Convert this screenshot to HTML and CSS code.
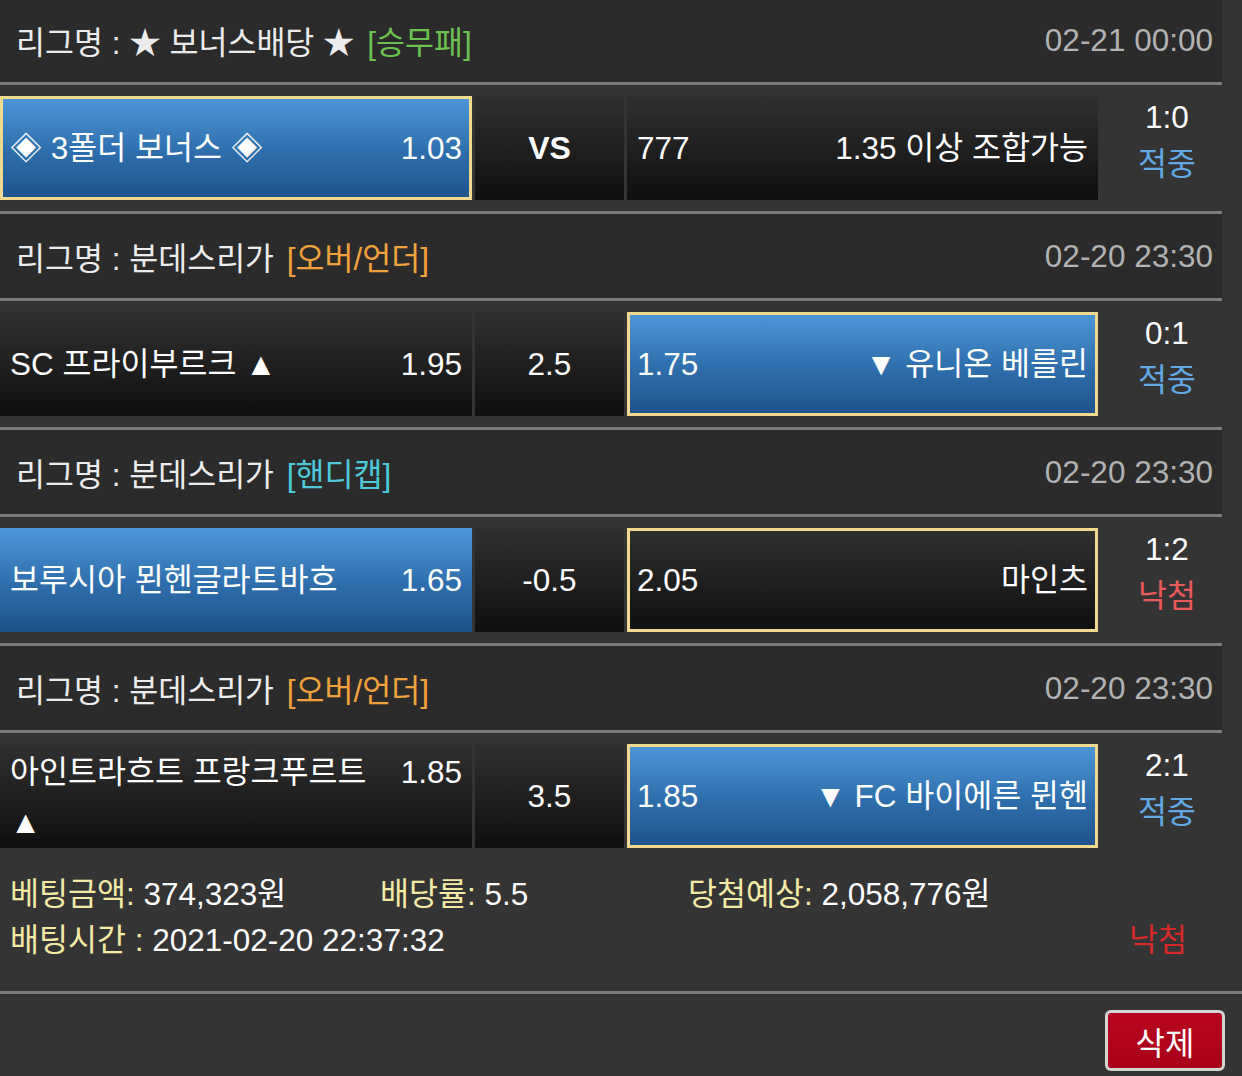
FILE: index.html
```html
<!DOCTYPE html>
<html lang="ko">
<head>
<meta charset="utf-8">
<title>배팅내역</title>
<link rel="stylesheet" href="styles.css">
</head>
<body>
<div class="page">
  <section class="match first">
    <div class="league"><span class="lname">리그명 : ★ 보너스배당 ★ <em class="tag win">[승무패]</em></span><span class="ldate">02-21 00:00</span></div>
    <div class="sep"></div>
    <div class="row">
      <div class="cell home blue picked"><span class="team">◈ 3폴더 보너스 ◈</span><span class="odd">1.03</span></div>
      <div class="cell mid dark"><span class="vs">VS</span></div>
      <div class="cell away dark"><span class="odd">777</span><span class="team">1.35 이상 조합가능</span></div>
      <div class="res"><span class="score">1:0</span><span class="hit">적중</span></div>
    </div>
    <div class="sep"></div>
  </section>
  <section class="match">
    <div class="league"><span class="lname">리그명 : 분데스리가 <em class="tag ou">[오버/언더]</em></span><span class="ldate">02-20 23:30</span></div>
    <div class="sep"></div>
    <div class="row">
      <div class="cell home dark"><span class="team">SC 프라이부르크 ▲</span><span class="odd">1.95</span></div>
      <div class="cell mid dark"><span>2.5</span></div>
      <div class="cell away blue picked"><span class="odd">1.75</span><span class="team">▼ 유니온 베를린</span></div>
      <div class="res"><span class="score">0:1</span><span class="hit">적중</span></div>
    </div>
    <div class="sep"></div>
  </section>
  <section class="match">
    <div class="league"><span class="lname">리그명 : 분데스리가 <em class="tag hc">[핸디캡]</em></span><span class="ldate">02-20 23:30</span></div>
    <div class="sep"></div>
    <div class="row">
      <div class="cell home blue"><span class="team">보루시아 묀헨글라트바흐</span><span class="odd">1.65</span></div>
      <div class="cell mid dark"><span>-0.5</span></div>
      <div class="cell away dark picked"><span class="odd">2.05</span><span class="team">마인츠</span></div>
      <div class="res"><span class="score">1:2</span><span class="miss">낙첨</span></div>
    </div>
    <div class="sep"></div>
  </section>
  <section class="match">
    <div class="league"><span class="lname">리그명 : 분데스리가 <em class="tag ou">[오버/언더]</em></span><span class="ldate">02-20 23:30</span></div>
    <div class="sep"></div>
    <div class="row">
      <div class="cell home dark tall"><span class="team wrap">아인트라흐트 프랑크푸르트 ▲</span><span class="odd">1.85</span></div>
      <div class="cell mid dark"><span>3.5</span></div>
      <div class="cell away blue picked"><span class="odd">1.85</span><span class="team">▼ FC 바이에른 뮌헨</span></div>
      <div class="res"><span class="score">2:1</span><span class="hit">적중</span></div>
    </div>
  </section>
  <div class="summary">
    <div class="sline">
      <span class="sitem s1"><b>베팅금액:</b> 374,323원</span>
      <span class="sitem s2"><b>배당률:</b> 5.5</span>
      <span class="sitem s3"><b>당첨예상:</b> 2,058,776원</span>
    </div>
    <div class="sline">
      <span class="sitem"><b>배팅시간 :</b> 2021-02-20 22:37:32</span>
      <span class="lost">낙첨</span>
    </div>
  </div>
  <div class="sep full"></div>
  <div class="actions"><button class="del">삭제</button></div>
</div>
</body>
</html>
```

FILE: styles.css
```css
* { box-sizing: border-box; }
html, body {
  margin: 0;
  padding: 0;
  background: #343434;
}
body {
  width: 1242px;
  height: 1076px;
  overflow: hidden;
  font-family: "Liberation Sans", "Noto Sans CJK KR", sans-serif;
  font-size: 31.5px;
  color: #ffffff;
}
.page {
  display: flex;
  flex-direction: column;
}
.match.first { margin-top: -2px; }
.league {
  width: 1222px;
  height: 84px;
  background: #2b2b2b;
  display: flex;
  align-items: center;
  justify-content: space-between;
  padding: 0 9px 0 16px;
  color: #ececec;
  white-space: nowrap;
}
.tag { font-style: normal; margin-left: 4px; }
.tag.win { color: #6cc24e; }
.tag.ou { color: #f2a23c; }
.tag.hc { color: #4ec9dc; }
.ldate { color: #b2b2b2; }
.sep {
  width: 1222px;
  height: 3px;
  background: #7c7c7c;
}
.sep.full { width: 1242px; }
.row {
  display: flex;
  align-items: flex-start;
  height: 126px;
  padding: 11px 0;
}
.cell {
  height: 104px;
  display: flex;
  align-items: center;
  justify-content: space-between;
  border: 3px solid transparent;
  background-origin: border-box;
  padding: 0 7px;
  line-height: 50px;
}
.cell.home { width: 472px; }
.cell.mid { width: 149px; margin-left: 3px; justify-content: center; }
.cell.away { width: 471px; margin-left: 3px; }
.cell.tall { align-items: flex-start; }
.dark { background-image: linear-gradient(#303030, #0f0f0f); }
.blue { background-image: linear-gradient(#4e98d8, #2e6dab 55%, #1e5289); }
.picked { border-color: #f2d98f; }
.team { white-space: nowrap; }
.team.wrap { white-space: normal; max-width: 376px; }
.odd { white-space: nowrap; }
.vs { font-weight: bold; font-size: 32px; }
.res {
  flex: 1;
  margin-top: -2px;
  padding-right: 6px;
  display: flex;
  flex-direction: column;
  align-items: center;
  line-height: 47px;
}
.hit { color: #62a8e4; }
.miss { color: #ea5a5a; }
.summary {
  height: 132px;
  padding: 12px 55px 0 10px;
  line-height: 46px;
}
.sline {
  display: flex;
  justify-content: space-between;
}
.sline:first-child { justify-content: flex-start; }
.sitem b { font-weight: normal; color: #f3eaa4; }
.s1 { width: 370px; }
.s2 { width: 308px; }
.lost { color: #d62a2a; }
.actions {
  display: flex;
  justify-content: flex-end;
  padding: 16px 17px 0 0;
}
.del {
  width: 120px;
  height: 61px;
  border: 3px solid #d4d4d4;
  border-radius: 6px;
  background: linear-gradient(#b8061f, #a8001a);
  color: #ffffff;
  font-family: "Liberation Sans", "Noto Sans CJK KR", sans-serif;
  font-size: 32px;
  padding: 0;
}
```
